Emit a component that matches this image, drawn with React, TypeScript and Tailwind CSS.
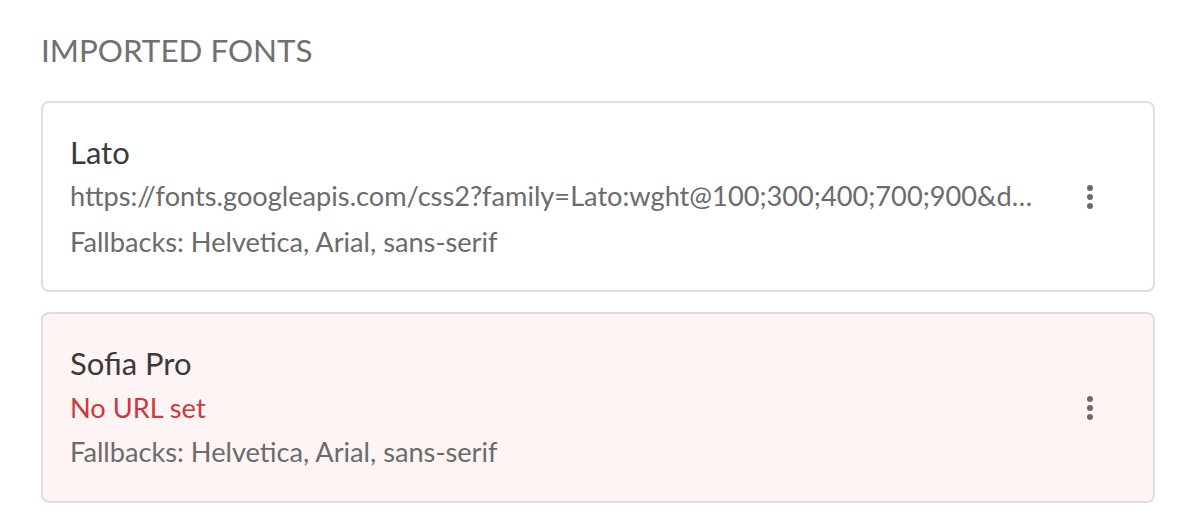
import React from "react";

function Kebab() {
  return (
    <button className="shrink-0 flex flex-col items-center justify-center gap-[3px] w-[40px] h-[40px]">
      <span className="block w-[6px] h-[6px] rounded-full bg-[#6a6a6a]" />
      <span className="block w-[6px] h-[6px] rounded-full bg-[#6a6a6a]" />
      <span className="block w-[6px] h-[6px] rounded-full bg-[#6a6a6a]" />
    </button>
  );
}

export default function App() {
  return (
    <div
      className="w-[1200px] h-[516px] bg-white px-[41px] pt-[30px]"
      style={{ fontFamily: "Lato, 'Noto Sans', sans-serif" }}
    >
      <h2 className="text-[31.4px] leading-[40px] text-[#707070] uppercase">Imported Fonts</h2>
      <div className="mt-[31px] flex flex-col gap-[20px] w-[1114px]">
        <div className="h-[191px] rounded-[8px] border-2 border-[#dedede] bg-white flex items-center pl-[27px] pr-[43px]">
          <div className="flex-1 min-w-0 self-start pt-[29px]">
            <div className="text-[31px] leading-[40px] text-[#3a3a3a]">Lato</div>
            <div className="mt-[6px] text-[27.2px] leading-[36px] text-[#6b6b6b] truncate pr-[36px]">
              https://fonts.googleapis.com/css2?family=Lato:wght@100;300;400;700;900&display=swap
            </div>
            <div className="mt-[10px] text-[27.2px] leading-[36px] text-[#6b6b6b]">
              Fallbacks: Helvetica, Arial, sans-serif
            </div>
          </div>
          <Kebab />
        </div>
        <div className="h-[191px] rounded-[8px] border-2 border-[#dedede] bg-[#fdf4f3] flex items-center pl-[27px] pr-[43px]">
          <div className="flex-1 min-w-0 self-start pt-[29px]">
            <div className="text-[31px] leading-[40px] text-[#3a3a3a]">Sofia Pro</div>
            <div className="mt-[7px] text-[27.2px] leading-[36px] text-[#cf383c]">No URL set</div>
            <div className="mt-[8px] text-[27.2px] leading-[36px] text-[#6b6b6b]">
              Fallbacks: Helvetica, Arial, sans-serif
            </div>
          </div>
          <Kebab />
        </div>
      </div>
    </div>
  );
}
